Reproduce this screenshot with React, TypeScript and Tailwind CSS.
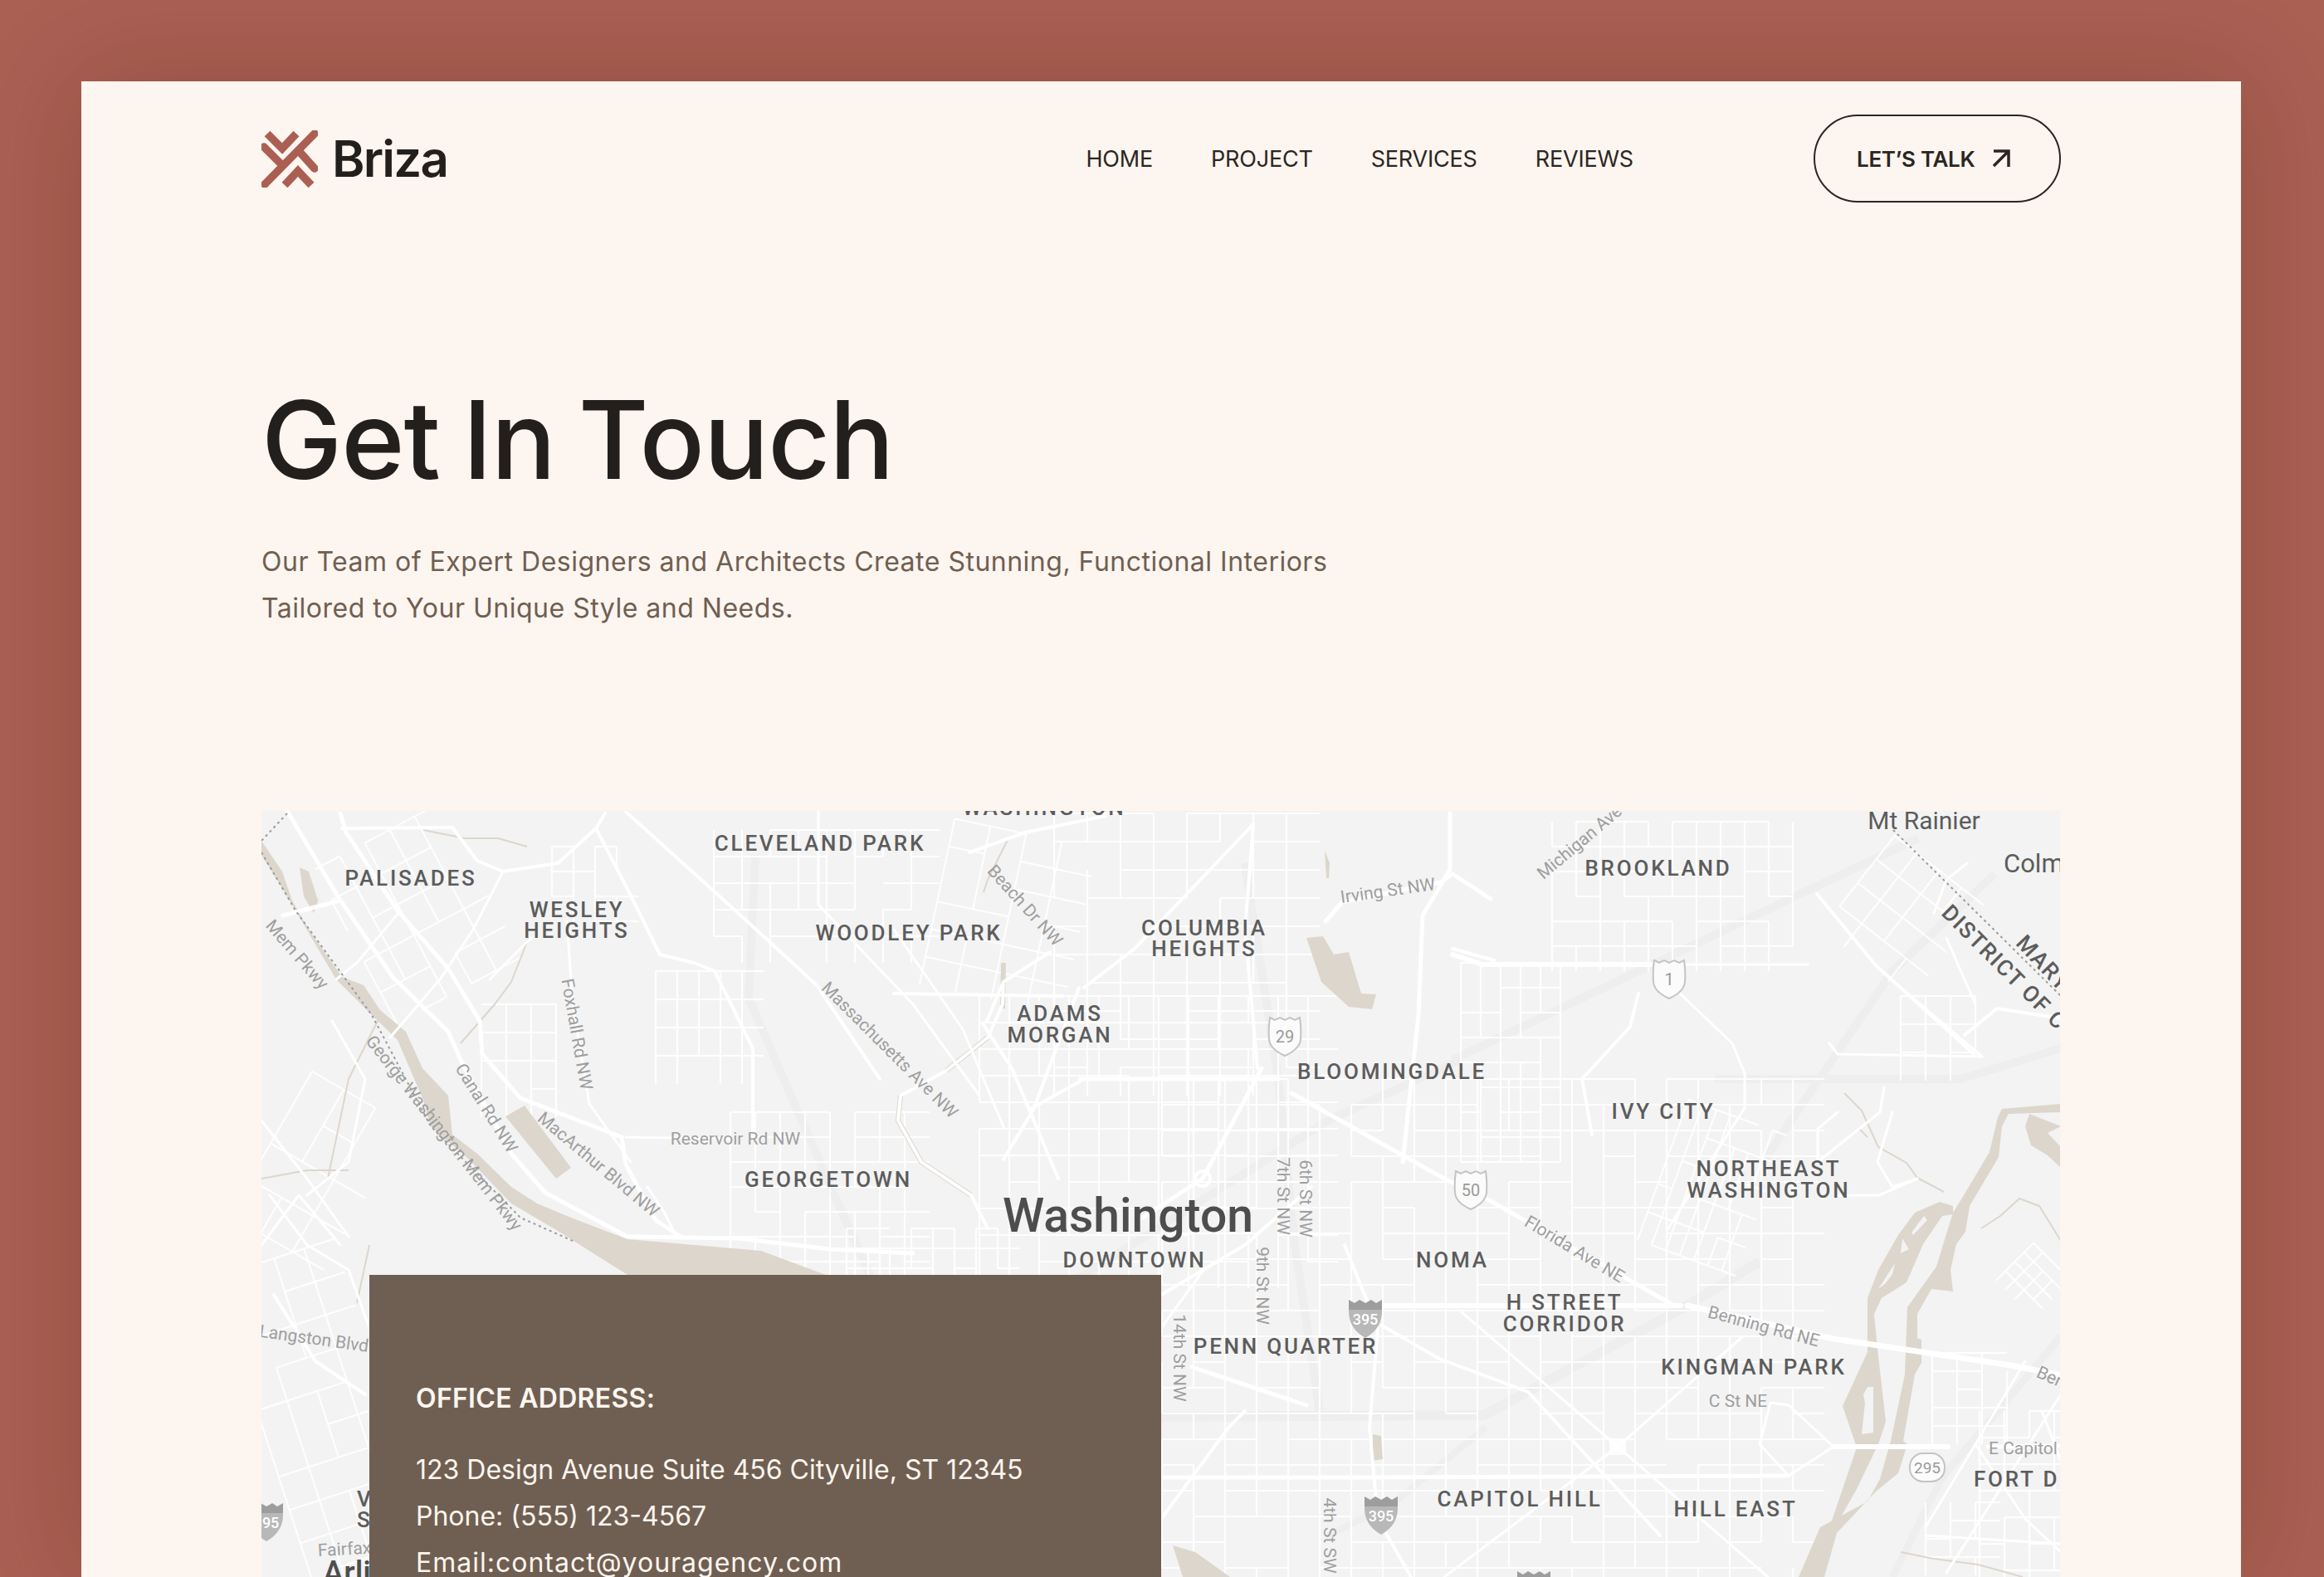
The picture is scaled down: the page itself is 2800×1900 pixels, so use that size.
const TAN = '#ddd6cc';

// pseudo random so the street grids break up the same way on every render
const noise = (a: number, b: number) => {
  const v = Math.sin(a * 12.9898 + b * 78.233) * 43758.5453;
  return v - Math.floor(v);
};

type Grid = { x: number; y: number; w: number; h: number; dx: number; dy: number; rot?: number };

const grids: Grid[] = [
  { x: 420, y: 1000, w: 150, h: 210, dx: 34, dy: 42, rot: -28 },
  { x: 665, y: 1020, w: 80, h: 90, dx: 26, dy: 30 },
  { x: 580, y: 1210, w: 90, h: 110, dx: 30, dy: 34 },
  { x: 790, y: 1170, w: 115, h: 110, dx: 26, dy: 34 },
  { x: 860, y: 1000, w: 250, h: 140, dx: 34, dy: 32 },
  { x: 880, y: 1340, w: 220, h: 190, dx: 30, dy: 30 },
  { x: 1130, y: 1000, w: 150, h: 180, dx: 44, dy: 34, rot: 12 },
  { x: 1270, y: 980, w: 300, h: 320, dx: 40, dy: 34 },
  { x: 1180, y: 1200, w: 400, h: 340, dx: 36, dy: 32 },
  { x: 1400, y: 1300, w: 770, h: 600, dx: 38, dy: 31 },
  { x: 1870, y: 990, w: 290, h: 170, dx: 29, dy: 30 },
  { x: 1760, y: 1160, w: 120, h: 240, dx: 24, dy: 30 },
  { x: 2000, y: 1340, w: 120, h: 180, dx: 18, dy: 36, rot: 20 },
  { x: 2230, y: 1030, w: 120, h: 130, dx: 34, dy: 36, rot: 38 },
  { x: 2290, y: 1200, w: 90, h: 70, dx: 30, dy: 34 },
  { x: 2328, y: 1630, w: 90, h: 100, dx: 30, dy: 22 },
  { x: 2385, y: 1700, w: 100, h: 200, dx: 30, dy: 32 },
  { x: 2320, y: 1810, w: 70, h: 70, dx: 30, dy: 22 },
  { x: 2420, y: 1510, w: 60, h: 60, dx: 16, dy: 16, rot: 45 },
  { x: 315, y: 1510, w: 130, h: 390, dx: 38, dy: 42, rot: -18 },
  { x: 320, y: 1300, w: 90, h: 200, dx: 44, dy: 50, rot: 30 },
  { x: 1020, y: 1480, w: 200, h: 60, dx: 26, dy: 24 },
];

const gridLines = grids.flatMap((g, gi) => {
  const out: { key: string; x1: number; y1: number; x2: number; y2: number; rot?: number; cx: number; cy: number }[] = [];
  const cx = g.x + g.w / 2;
  const cy = g.y + g.h / 2;
  for (let x = g.x, i = 0; x <= g.x + g.w; x += g.dx, i++) {
    for (let y = g.y, j = 0; y < g.y + g.h; y += g.dy, j++) {
      if (noise(gi + i * 3, j) > 0.14) out.push({ key: `v${gi}-${i}-${j}`, x1: x, y1: y, x2: x, y2: y + g.dy, rot: g.rot, cx, cy });
    }
  }
  for (let y = g.y, j = 0; y <= g.y + g.h; y += g.dy, j++) {
    for (let x = g.x, i = 0; x < g.x + g.w; x += g.dx, i++) {
      if (noise(gi + j * 5, i + 40) > 0.22) out.push({ key: `h${gi}-${i}-${j}`, x1: x, y1: y, x2: x + g.dx, y2: y, rot: g.rot, cx, cy });
    }
  }
  return out;
});

// [width, points]
const roads: [number, string][] = [
  [5, '346,977 407,1080 473,1177 540,1243 555,1277 616,1390 657,1437 700,1460 756,1490 890,1492 1000,1505 1100,1510'],
  [5, '410,980 417,1003 479,1097 540,1167 578,1230 581,1270 627,1323 749,1370 754,1403 790,1470 820,1490'],
  [4, '729,980 718,998 672,1040 606,1050 575,1037 545,997 412,998'],
  [4, '718,998 759,1077 795,1150 836,1160 861,1170 907,1263 907,1370'],
  [4, '754,978 897,1107 984,1187 1060,1300'],
  [3, '986,978 986,1090 1100,1210 1180,1320'],
  [5, '341,1103 410,1085'],
  [3, '606,1050 570,1120 530,1180 470,1250'],
  [3, '480,1100 430,1160 405,1180'],
  [3, '683,1110 690,1210 710,1330 760,1400'],
  [3, '640,1130 620,1150 590,1180'],
  [3, '815,1490 800,1460 780,1430'],
  [3, '754,1370 880,1372'],
  [4, '1306,1190 1367,1143 1510,993'],
  [4, '1168,1027 1235,1003 1332,983'],
  [4, '1077,1197 1280,1200'],
  [4, '1189,1230 1209,1183 1265,1147'],
  [4, '1209,1183 1208,1210 1190,1250 1140,1290 1085,1320 1082,1350 1110,1400 1170,1440 1190,1480'],
  [3, '1077,1120 1160,1240 1210,1360'],
  [5, '1301,1300 1541,1300'],
  [4, '1240,1337 1306,1300'],
  [4, '1209,1397 1245,1337 1300,1190'],
  [4, '1275,1420 1219,1287 1184,1233'],
  [5, '1520,1287 1449,1420 1372,1470'],
  [4, '1515,1287 1500,1120 1510,993'],
  [5, '1556,1317 1740,1420 1796,1447 2017,1573'],
  [5, '1597,1110 1617,1087 1735,1063 1750,1053 1796,1083'],
  [5, '1747,980 1747,1047 1714,1103 1709,1223 1690,1400'],
  [4, '1800,1157 1750,1143'],
  [6, '1750,1150 1786,1162 1990,1162'],
  [3, '1990,1162 2179,1162'],
  [4, '1974,1197 1964,1237 1906,1300 1918,1367'],
  [3, '2020,1193 2087,1257 2102,1293 2102,1335'],
  [3, '2102,1335 2060,1400 2010,1480'],
  [4, '2189,1077 2260,1163 2378,1270'],
  [3, '2270,1173 2388,1273'],
  [4, '2367,1247 2406,1215 2483,1227'],
  [3, '2204,1257 2214,1270 2388,1273'],
  [3, '2330,1100 2345,1060 2370,1040'],
  [3, '2345,1130 2380,1210'],
  [3, '2280,1340 2262,1400 2280,1430 2310,1420 2264,1440 2215,1440'],
  [3, '2214,1340 2190,1360 2190,1400 2265,1340 2270,1310'],
  [7, '2033,1573 2209,1613 2423,1645 2484,1657'],
  [6, '1665,1573 2025,1573'],
  [5, '1399,1780 1642,1780 2155,1778'],
  [6, '2209,1743 2347,1743'],
  [5, '2395,1743 2484,1742'],
  [4, '1665,1597 1734,1637 1841,1677 2000,1850'],
  [5, '1436,1647 1574,1693'],
  [3, '2155,1693 2209,1743 2155,1778 2120,1740 2133,1690 2155,1693'],
  [3, '1949,1743 1740,1900'],
  [3, '1949,1743 2130,1900'],
  [3, '1949,1743 1760,1580'],
  [3, '1949,1743 2100,1610'],
  [4, '1620,1500 1660,1600 1650,1720 1660,1830 1700,1900'],
  [4, '1399,1560 1500,1500 1580,1430'],
  [3, '2320,1840 2440,1640'],
  [3, '2345,1895 2483,1680'],
  [3, '2460,1700 2483,1760'],
  [3, '2380,1740 2440,1830 2483,1870'],
  [3, '2320,1850 2483,1860'],
  [4, '330,1560 380,1640 440,1680'],
  [3, '325,1440 370,1500 420,1530 445,1600'],
  [3, '315,1350 370,1420 420,1490'],
  [3, '400,1230 440,1300 420,1400 370,1440'],
  [3, '315,1500 360,1440 410,1500'],
  [4, '1399,1830 1480,1720 1500,1700'],
  [3, '1399,1600 1450,1530'],
];

const faint: [number, string][] = [
  [10, '1750,1277 2184,1070 2311,1010'],
  [10, '2122,1403 2280,1170 2403,1053'],
  [10, '2066,1300 2362,1300 2483,1263'],
  [12, '1390,1707 1788,1705 2033,1573 2120,1520'],
  [10, '910,1030 902,1203 1004,1437 1050,1540'],
  [10, '1500,1040 1540,1300 1560,1500 1590,1700'],
  [10, '1300,1540 1600,1350 1760,1277'],
  [9, '2280,1900 2340,1780 2483,1610'],
  [8, '1600,1850 1680,1810 1790,1720'],
];

const tanLines: [number, string][] = [
  [2, '637,1130 616,1183 596,1210 555,1257'],
  [2, '510,1000 560,1010 600,1010 635,1020'],
  [2, '1215,1010 1190,1060 1185,1075'],
  [6, '1209,1160 1208,1215'],
  [6, '1190,1250 1140,1290'],
  [6, '1085,1320 1082,1350 1110,1400 1170,1440'],
  [2, '2222,1317 2243,1338 2263,1382 2297,1401 2310,1419 2342,1436'],
  [2, '2387,1480 2410,1465 2433,1444 2457,1453 2483,1495'],
  [2, '2290,1870 2330,1878 2383,1885 2437,1900'],
  [2, '2250,1370 2240,1360'],
  [2, '315,1420 370,1410 420,1410'],
  [2, '460,1220 420,1300 395,1420'],
  [2, '445,1500 430,1570'],
];

const tanShapes = [
  // Potomac
  '315,1013 340,1050 352,1085 372,1120 412,1177 438,1187 458,1217 489,1243 509,1287 540,1320 545,1367 575,1390 616,1430 647,1450 688,1467 756,1493 917,1507 995,1536 756,1536 672,1483 616,1450 565,1397 519,1357 509,1323 479,1253 448,1223 405,1180 356,1097 340,1070 315,1030',
  '361,1045 372,1050 383,1085 387,1075 378,1100 366,1080',
  '609,1345 632,1332 688,1407 670,1420',
  // reservoir
  '1574,1130 1594,1128 1607,1150 1625,1147 1640,1197 1658,1198 1653,1216 1625,1213 1592,1183',
  '1596,1025 1602,1040 1601,1058 1598,1058',
  // Anacostia
  '2483,1330 2412,1336 2407,1346 2397,1388 2363,1445 2353,1461 2333,1526 2298,1575 2295,1656 2278,1736 2265,1782 2250,1809 2193,1840 2167,1900 2198,1900 2213,1847 2260,1797 2287,1775 2298,1740 2293,1736 2307,1656 2315,1642 2315,1614 2310,1612 2310,1583 2327,1553 2353,1556 2350,1530 2357,1499 2368,1484 2373,1453 2408,1394 2412,1357 2420,1342 2483,1340',
  '2207,1832 2237,1744 2220,1694 2250,1629 2250,1564 2263,1530 2287,1488 2307,1461 2337,1448 2353,1453 2353,1463 2340,1465 2317,1499 2297,1545 2267,1564 2258,1583 2262,1625 2272,1713 2263,1740 2237,1794 2212,1838',
  '2440,1357 2445,1342 2483,1357 2467,1365 2483,1382 2483,1407 2467,1392 2447,1380',
  '1413,1862 1440,1870 1482,1900 1425,1900',
  '1654,1728 1664,1730 1666,1758 1654,1760',
];

const tanHoles = [
  '2245,1680 2250,1671 2257,1671 2257,1726 2243,1728 2247,1690',
  '2263,1553 2283,1522 2280,1535 2272,1546',
  '2303,1485 2318,1465 2322,1470 2305,1488',
  '2292,1492 2300,1505 2290,1510',
];

const districts: [string, number, number][] = [
  ['CLEVELAND PARK', 988, 1016],
  ['PALISADES', 495, 1058],
  ['WESLEY', 695, 1096],
  ['HEIGHTS', 695, 1121],
  ['WOODLEY PARK', 1095, 1124],
  ['COLUMBIA', 1451, 1118],
  ['HEIGHTS', 1451, 1143],
  ['ADAMS', 1277, 1221],
  ['MORGAN', 1277, 1247],
  ['BLOOMINGDALE', 1677, 1291],
  ['BROOKLAND', 1998, 1046],
  ['IVY CITY', 2004, 1339],
  ['NORTHEAST', 2131, 1408],
  ['WASHINGTON', 2131, 1434],
  ['GEORGETOWN', 998, 1421],
  ['DOWNTOWN', 1367, 1518],
  ['NOMA', 1750, 1518],
  ['H STREET', 1885, 1569],
  ['CORRIDOR', 1885, 1595],
  ['PENN QUARTER', 1549, 1622],
  ['KINGMAN PARK', 2113, 1647],
  ['CAPITOL HILL', 1831, 1806],
  ['HILL EAST', 2091, 1818],
  ['WASHINGTON', 1258, 973],
];

// [text, x, y, rotation, anchor]
const streets: [string, number, number, number, string][] = [
  ['Mem Pkwy', 358, 1150, 49, 'middle'],
  ['George Washington Mem Pkwy', 535, 1365, 52, 'middle'],
  ['Canal Rd NW', 586, 1335, 58, 'middle'],
  ['Foxhall Rd NW', 695, 1246, 80, 'middle'],
  ['MacArthur Blvd NW', 721, 1403, 40, 'middle'],
  ['Massachusetts Ave NW', 1072, 1265, 45, 'middle'],
  ['Reservoir Rd NW', 886, 1372, 0, 'middle'],
  ['Beach Dr NW', 1235, 1091, 48, 'middle'],
  ['Irving St NW', 1672, 1073, -8, 'middle'],
  ['Michigan Ave NE', 1855, 1055, -40, 'start'],
  ['6th St NW', 1573, 1444, 90, 'middle'],
  ['7th St NW', 1546, 1441, 90, 'middle'],
  ['9th St NW', 1521, 1549, 90, 'middle'],
  ['14th St NW', 1421, 1636, 90, 'middle'],
  ['4th St SW', 1602, 1850, 90, 'middle'],
  ['Florida Ave NE', 1897, 1505, 31, 'middle'],
  ['Benning Rd NE', 2125, 1598, 15, 'middle'],
  ['Benning Rd NE', 2455, 1652, 24, 'start'],
  ['C St NE', 2094, 1688, 0, 'middle'],
  ['E Capitol St', 2396, 1745, 0, 'start'],
  ['Langston Blvd', 444, 1622, 8, 'end'],
  ['Fairfax Dr', 383, 1868, -3, 'start'],
];

const usShields: [string, number, number][] = [
  ['29', 1548, 1248],
  ['50', 1772, 1433],
  ['1', 2011, 1179],
];

const interstates: [number, number][] = [
  [1645, 1588],
  [1664, 1825],
  [1848, 1915],
  [321, 1833],
];

const MapCanvas = () => (
  <svg
    className="block font-['Roboto',sans-serif]"
    width="2167"
    height="923"
    viewBox="315 977 2167 923"
    fill="none"
  >
    <rect x="315" y="977" width="2167" height="923" fill="#f3f3f3" />

    {faint.map(([w, p], i) => (
      <polyline key={i} points={p} stroke="#eeeeee" strokeWidth={w} strokeLinejoin="round" />
    ))}
    <g stroke="#ffffff" strokeWidth="2.2" strokeOpacity="0.85">
      {gridLines.map((l) => (
        <line
          key={l.key}
          x1={l.x1}
          y1={l.y1}
          x2={l.x2}
          y2={l.y2}
          transform={l.rot ? `rotate(${l.rot} ${l.cx} ${l.cy})` : undefined}
        />
      ))}
    </g>
    {tanLines.map(([w, p], i) => (
      <polyline key={i} points={p} stroke={TAN} strokeWidth={w} strokeLinejoin="round" />
    ))}
    {tanShapes.map((p, i) => (
      <polygon key={i} points={p} fill={TAN} />
    ))}
    {tanHoles.map((p, i) => (
      <polygon key={i} points={p} fill="#f3f3f3" />
    ))}
    {roads.map(([w, p], i) => (
      <polyline key={i} points={p} stroke="#ffffff" strokeWidth={w} strokeLinejoin="round" strokeLinecap="round" />
    ))}
    <circle cx="1449" cy="1420" r="9" stroke="#ffffff" strokeWidth="4" />
    <rect x="1939" y="1733" width="20" height="20" fill="#ffffff" fillOpacity="0.8" />

    {/* state line */}
    <g stroke="#9b9b9b" strokeWidth="2" strokeDasharray="3 4">
      <polyline points="2281,1000 2483,1200" />
      <polyline points="346,980 315,1013" />
      <polyline points="315,1027 356,1097 448,1223 519,1357 627,1467 690,1495" />
    </g>

    {/* road shields */}
    {usShields.map(([n, x, y]) => (
      <g key={n} transform={`translate(${x} ${y})`}>
        <path
          d="M-18 -22 L-12 -19 L-6 -22 L0 -19 L6 -22 L12 -19 L18 -22 Q20 -8 19 4 Q18 16 0 24 Q-18 16 -19 4 Q-20 -8 -18 -22 Z"
          fill="#fbfbfb"
          stroke="#c4c4c4"
          strokeWidth="2"
        />
        <text textAnchor="middle" y="8" fontSize="20" fill="#9a9a9a">{n}</text>
      </g>
    ))}
    <g transform="translate(2322 1768)">
      <rect x="-21" y="-17" width="42" height="34" rx="16" fill="#fbfbfb" stroke="#c4c4c4" strokeWidth="2" />
      <text textAnchor="middle" y="7" fontSize="19" fill="#9a9a9a">295</text>
    </g>
    {interstates.map(([x, y]) => (
      <g key={`${x}-${y}`} transform={`translate(${x} ${y})`}>
        <path d="M-20 -22 L-13 -18 L-7 -22 L0 -18 L7 -22 L13 -18 L20 -22 L20 -10 L-20 -10 Z" fill="#9d9d9d" />
        <path d="M-20 -10 L20 -10 Q21 12 0 24 Q-21 12 -20 -10 Z" fill="#b8b8b8" />
        <text textAnchor="middle" y="8" fontSize="18" fontWeight="500" fill="#ffffff">395</text>
      </g>
    ))}

    {/* street names */}
    {streets.map(([t, x, y, r, a], i) => (
      <text
        key={i}
        x={x}
        y={y}
        fontSize="21"
        fill="#9e9e9e"
        textAnchor={a as 'middle' | 'start' | 'end'}
        dominantBaseline="central"
        transform={r ? `rotate(${r} ${x} ${y})` : undefined}
      >
        {t}
      </text>
    ))}

    {/* neighbourhoods */}
    {districts.map(([t, x, y], i) => (
      <text
        key={i}
        x={x}
        y={y}
        fontSize="26"
        fontWeight="500"
        letterSpacing="2.8"
        fill="#5c5c5c"
        textAnchor="middle"
        dominantBaseline="central"
      >
        {t}
      </text>
    ))}
    <text x="1359" y="1464" fontSize="57" fontWeight="500" fill="#4d4d4d" textAnchor="middle" dominantBaseline="central">Washington</text>
    <text x="2318" y="988" fontSize="30" fill="#5c5c5c" textAnchor="middle" dominantBaseline="central">Mt Rainier</text>
    <text x="2414" y="1040" fontSize="31" fill="#5c5c5c" dominantBaseline="central">Colmar Manor</text>
    <text x="2378" y="1782" fontSize="26" fontWeight="500" letterSpacing="2.8" fill="#5c5c5c" dominantBaseline="central">FORT DUPONT</text>
    <text x="2344" y="1095" fontSize="27" fontWeight="500" letterSpacing="1.5" fill="#5c5c5c" dominantBaseline="central" transform="rotate(45 2344 1095)">DISTRICT OF COLUMBIA</text>
    <text x="2434" y="1131" fontSize="27" fontWeight="500" letterSpacing="1.5" fill="#5c5c5c" dominantBaseline="central" transform="rotate(47 2434 1131)">MARYLAND</text>
    <text x="430" y="1806" fontSize="26" fontWeight="500" letterSpacing="2.8" fill="#5c5c5c" dominantBaseline="central">VIRGINIA</text>
    <text x="430" y="1831" fontSize="26" fontWeight="500" letterSpacing="2.8" fill="#5c5c5c" dominantBaseline="central">SQUARE</text>
    <text x="389" y="1908" fontSize="38" fontWeight="500" fill="#4d4d4d">Arlington</text>
  </svg>
);

const BrizaLogo = () => (
  <svg className="w-[68px] h-[69px]" viewBox="0 0 68 69" fill="none" stroke="#ab5f52" strokeWidth="9.5">
    <path d="M7 4 L25 22 L42 4" />
    <path d="M64 4 L4 65" strokeLinecap="round" />
    <path d="M3 20 L24 41" strokeLinecap="round" />
    <path d="M46 26 L64 46" strokeLinecap="round" />
    <path d="M28 66 L44 49 L60 66" />
  </svg>
);

const links = ['HOME', 'PROJECT', 'SERVICES', 'REVIEWS'];

export default function App() {
  return (
    <div className="h-screen overflow-hidden bg-[#aa6053] pl-[98px] pr-[100px] pt-[98px] font-['Inter',sans-serif]">
      <div className="flex h-full flex-col bg-[#fdf5ef] px-[217px] pt-[40px] shadow-[0_0_120px_rgba(60,20,10,0.22)]">
        <header className="flex h-[106px] items-center">
          <div className="flex items-center gap-[17px]">
            <BrizaLogo />
            <span className="text-[60px] font-semibold leading-none tracking-[-1.8px] text-[#231f1c]">Briza</span>
          </div>
          <nav className="ml-auto flex gap-[70px] pt-[2px] text-[27px] tracking-[-0.2px] text-[#2b2623]">
            {links.map((l) => (
              <a key={l}>{l}</a>
            ))}
          </nav>
          <button className="ml-[217px] flex h-[106px] w-[298px] items-center gap-[20px] rounded-full border-[2.5px] border-[#2b2623] pl-[50px] text-[26px] font-semibold tracking-[-0.3px] text-[#2b2623]">
            LET’S TALK
            <svg className="h-[22px] w-[22px]" viewBox="0 0 22 22" fill="none" stroke="#2b2623" strokeWidth="3.5">
              <path d="M2 2 H20 V21 M20 2 L2 20" />
            </svg>
          </button>
        </header>

        <h1 className="mt-[211px] text-[130px] font-medium leading-[150px] tracking-[-1px] [word-spacing:-6px] text-[#231f1c]">Get In Touch</h1>
        <p className="mt-[44px] text-[32px] leading-[56px] tracking-[0.5px] text-[#6f5f52]">
          Our Team of Expert Designers and Architects Create Stunning, Functional Interiors
          <br />
          Tailored to Your Unique Style and Needs.
        </p>

        <section className="relative mt-[216px] min-h-0 flex-1 overflow-hidden">
          <MapCanvas />
          <div className="absolute left-[130px] top-[559px] h-[500px] w-[954px] bg-[#6f5f52] px-[56px] pt-[121px] text-[32px] leading-[56px] text-[#fdf5ef]">
            <h2 className="mb-[30px] font-semibold tracking-[0.3px]">OFFICE ADDRESS:</h2>
            <p>123 Design Avenue Suite 456 Cityville, ST 12345</p>
            <p>Phone: (555) 123-4567</p>
            <p className="tracking-[1px]">Email:contact@youragency.com</p>
          </div>
        </section>
      </div>
    </div>
  );
}
